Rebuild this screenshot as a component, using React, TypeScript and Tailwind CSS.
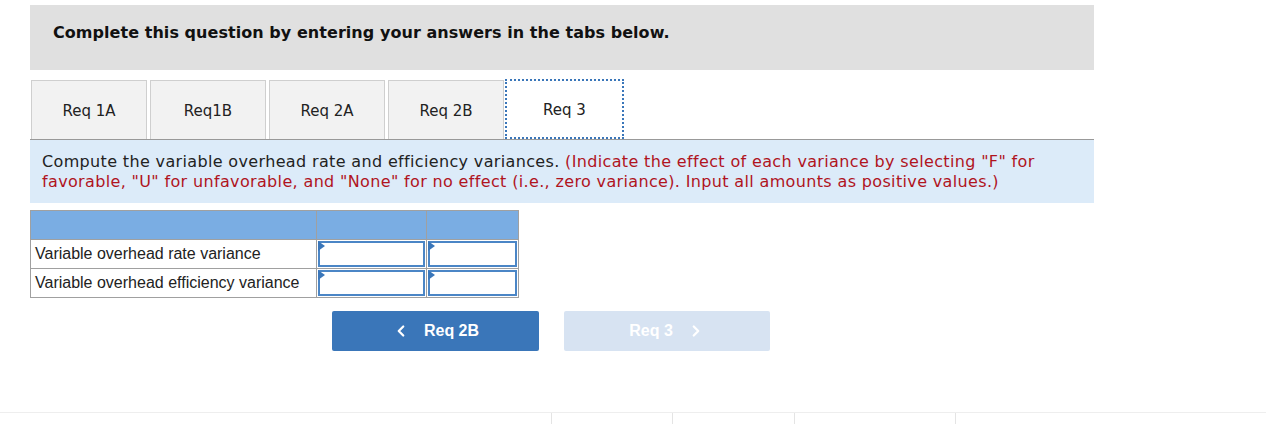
import { ChevronLeft, ChevronRight } from "lucide-react";

const tabs = ["Req 1A", "Req1B", "Req 2A", "Req 2B", "Req 3"];

const rows = ["Variable overhead rate variance", "Variable overhead efficiency variance"];

const AnswerCell = () => (
    <td className="border border-[#a0a0a0] p-0 h-[29px]">
        <div className="relative h-full w-full p-[1px]">
            <div className="h-full w-full border-2 border-[#4b86c6] bg-white"></div>
            <span className="absolute left-[1px] top-[1px] w-0 h-0 border-t-[5px] border-b-[5px] border-l-[7px] border-t-transparent border-b-transparent border-l-[#3a76b9]"></span>
        </div>
    </td>
);

const App = () => {
    return (
        <div className="w-[1266px] h-[424px] bg-white relative font-['DejaVu_Sans',Verdana,sans-serif]">
            <div className="pt-[5px] px-[30px] w-[1064px] box-content">
                <div className="bg-[#e0e0e0] h-[65px] pl-[23px] pt-[16px]">
                    <div className="font-bold text-[16px] text-[#111] tracking-[0.05px]">Complete this question by entering your answers in the tabs below.</div>
                </div>

                <div className="mt-[10px] flex items-end border-b border-[#999] h-[60px] w-[1064px]">
                    { tabs.map((t, i) => {
                        const active = i === tabs.length - 1;
                        return (
                            <div
                                key={ t }
                                className={ active
                                    ? "-ml-[1px] w-[119px] h-[60px] bg-white outline-2 outline-dotted outline-[#3a76b9] -outline-offset-2 flex items-center justify-center pt-[2px] text-[15px] text-[#222]"
                                    : "mr-[2px] ml-[1px] w-[116px] h-[59px] bg-[#f2f2f2] border border-[#cfcfcf] border-b-0 flex items-center justify-center pt-[2px] text-[15px] text-[#222]" }
                            >
                                { t }
                            </div>
                        );
                    }) }
                </div>

                <div className="bg-[#dcebf9] w-[1064px] h-[63px] pl-[12px] pr-[20px] pt-[12px] text-[16px] leading-[20px] tracking-[0.35px] text-[#222]">
                    Compute the variable overhead rate and efficiency variances. <span className="text-[#b0141e]">(Indicate the effect of each variance by selecting "F" for favorable, "U" for unfavorable, and "None" for no effect (i.e., zero variance). Input all amounts as positive values.)</span>
                </div>

                <table className="mt-[7px] border-collapse font-['Liberation_Sans',Arial,sans-serif] text-[16px] text-[#222]">
                    <tbody>
                        <tr className="bg-[#7aade3] h-[29px]">
                            <td className="border border-[#a0a0a0] w-[286px]"></td>
                            <td className="border border-[#a0a0a0] w-[110px]"></td>
                            <td className="border border-[#a0a0a0] w-[92px]"></td>
                        </tr>
                        { rows.map(r => (
                            <tr key={ r } className="h-[29px]">
                                <td className="border border-[#a0a0a0] border-r-0 pl-[4px] whitespace-nowrap">{ r }</td>
                                <AnswerCell />
                                <AnswerCell />
                            </tr>
                        )) }
                    </tbody>
                </table>

                <div className="mt-[13px] flex gap-[25px] pl-[302px] font-['Liberation_Sans',Arial,sans-serif]">
                    <div className="w-[207px] h-[40px] rounded-[2px] bg-[#3a76b9] flex items-center justify-center gap-[14px] text-white font-bold text-[16px]">
                        <ChevronLeft size={ 18 } strokeWidth={ 3 } />
                        <span>Req 2B</span>
                    </div>
                    <div className="w-[206px] h-[40px] rounded-[2px] bg-[#d7e3f2] flex items-center justify-center gap-[14px] text-white font-bold text-[16px]">
                        <span>Req 3</span>
                        <ChevronRight size={ 18 } strokeWidth={ 3 } />
                    </div>
                </div>
            </div>

            <div className="absolute left-0 right-0 top-[412px] border-t border-[#eeeeee] h-[12px] flex">
                <div className="w-[552px] border-r border-[#e4e4e4] h-[12px]"></div>
                <div className="w-[121px] border-r border-[#e4e4e4] h-[12px]"></div>
                <div className="w-[122px] border-r border-[#e4e4e4] h-[12px]"></div>
                <div className="w-[161px] border-r border-[#e4e4e4] h-[12px]"></div>
            </div>
        </div>
    );
}
export default App;
